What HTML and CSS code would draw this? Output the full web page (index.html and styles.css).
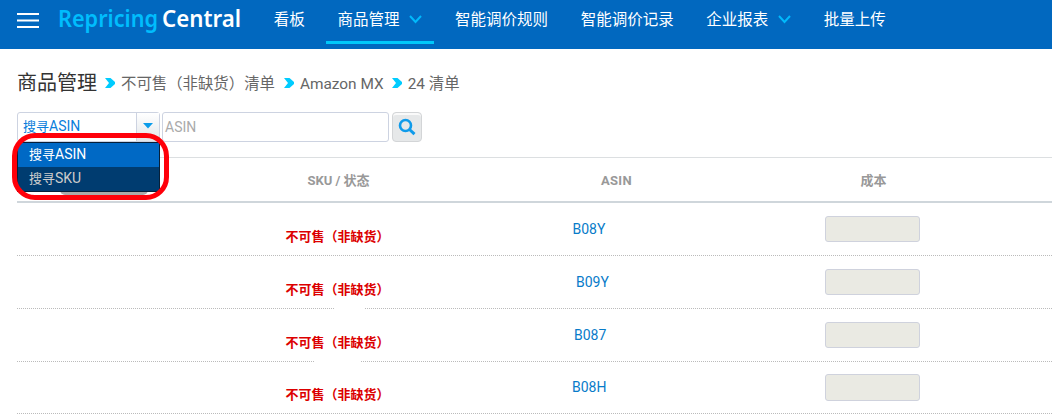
FILE: index.html
```html
<!DOCTYPE html>
<html lang="zh-CN">
<head>
<meta charset="utf-8">
<title>Repricing Central</title>
<link rel="stylesheet" href="styles.css">
</head>
<body>
<header class="topbar">
  <svg class="menu" width="22" height="15" viewBox="0 0 22 15"><path d="M0 1h22M0 7.500h22M0 14h22" stroke="#fff" stroke-width="2"/></svg>
  <svg class="logo" width="190" height="40" viewBox="0 0 190 40">
    <text class="logo-a" x="0" y="27" textLength="100" lengthAdjust="spacingAndGlyphs">Repricing</text>
    <text class="logo-b" x="104" y="27" textLength="79" lengthAdjust="spacingAndGlyphs">Central</text>
  </svg>
  <nav class="nav">
    <a class="nav-item">看板</a>
    <a class="nav-item active">商品管理<svg class="chev" width="13" height="9" viewBox="0 0 13 9"><path d="M1 1l5.500 6L12 1" fill="none" stroke="#00b9fc" stroke-width="2"/></svg></a>
    <a class="nav-item">智能调价规则</a>
    <a class="nav-item">智能调价记录</a>
    <a class="nav-item">企业报表<svg class="chev" width="13" height="9" viewBox="0 0 13 9"><path d="M1 1l5.500 6L12 1" fill="none" stroke="#00b9fc" stroke-width="2"/></svg></a>
    <a class="nav-item">批量上传</a>
  </nav>
</header>
<main class="page">
  <div class="crumbs">
    <h1>商品管理</h1>
    <svg class="sep sep-first" width="10" height="10" viewBox="0 0 10 10"><path d="M0 0h5.500L10 4v2l-4.500 4H0l4-5z" fill="#0cf"/></svg>
    <span>不可售（非缺货）清单</span>
    <svg class="sep" width="10" height="10" viewBox="0 0 10 10"><path d="M0 0h5.500L10 4v2l-4.500 4H0l4-5z" fill="#0cf"/></svg>
    <span>Amazon MX</span>
    <svg class="sep sep-last" width="10" height="10" viewBox="0 0 10 10"><path d="M0 0h5.500L10 4v2l-4.500 4H0l4-5z" fill="#0cf"/></svg>
    <span>24 清单</span>
  </div>
  <div class="search">
    <div class="select">
      <span class="select-value">搜寻<span class="latin">ASIN</span></span>
      <span class="select-arrow"><svg width="10" height="6" viewBox="0 0 10 6"><path d="M0 0h10L5 5.500z" fill="#0a9cea"/></svg></span>
      <div class="tab-shadow"></div>
      <div class="menu-list">
        <div class="option selected">搜寻<span class="latin">ASIN</span></div>
        <div class="option">搜寻<span class="latin">SKU</span></div>
      </div>
      <div class="highlight"></div>
    </div>
    <div class="field">ASIN</div>
    <div class="go"><svg width="18" height="18" viewBox="0 0 18 18"><circle cx="7.500" cy="7.500" r="5.500" fill="none" stroke="#109bea" stroke-width="2.600"/><path d="M11.500 11.500l5 4.700" stroke="#109bea" stroke-width="3"/></svg></div>
  </div>
  <div class="table">
    <div class="row head"><div></div><div>SKU / 状态</div><div class="h-asin">ASIN</div><div>成本</div><div></div></div>
    <div class="row"><div></div><div class="status">不可售（非缺货）</div><div class="asin a1">B08Y</div><div class="cost"><span></span></div><div></div></div>
    <div class="row gap-a"><div></div><div class="status">不可售（非缺货）</div><div class="asin a2">B09Y</div><div class="cost"><span></span></div><div></div></div>
    <div class="row gap-b"><div></div><div class="status">不可售（非缺货）</div><div class="asin a3">B087</div><div class="cost"><span></span></div><div></div></div>
    <div class="row last"><div></div><div class="status">不可售（非缺货）</div><div class="asin a4">B08H</div><div class="cost"><span></span></div><div></div></div>
  </div>
</main>
</body>
</html>
```
FILE: styles.css
```css
* { box-sizing: border-box; }
body {
  margin: 0;
  height: 416px;
  overflow: hidden;
  background: #fff;
  font-family: Roboto, "Noto Sans CJK SC", sans-serif;
  color: #666;
}
.topbar { display: flex; height: 49px; background: #0168bf; padding-left: 17px; }
.menu { margin-top: 13px; flex: none; }
.logo { margin-left: 19px; flex: none; overflow: visible; }
.logo text { font-family: "Noto Sans", "Open Sans", sans-serif; font-size: 23px; font-weight: 600; }
.logo-a { fill: #00bdfd; }
.logo-b { fill: #fff; }
.nav { display: flex; gap: 10px; margin-left: 14.500px; }
.nav-item {
  display: flex;
  height: 44px;
  padding: 0 11.300px;
  line-height: 40px;
  font-size: 15.500px;
  color: #fff;
  white-space: nowrap;
}
.nav-item.active { border-bottom: 3px solid #00c8fa; }
.chev { margin: 15px 0 0 10px; }
.page { padding-left: 17px; }
.crumbs { display: flex; height: 63px; padding-top: 21px; line-height: 28px; font-size: 15.400px; white-space: nowrap; }
.crumbs h1 { margin: 0; font-size: 20px; font-weight: 400; line-height: 27px; color: #333; }
.sep { margin: 8px 6px 0 9px; flex: none; }
.sep-first { margin: 8px 6px 0 8px; }
.sep-last { margin-left: 8px; }
.search { display: flex; height: 45px; }
.latin { font-size: 14px; }
.select { position: relative; z-index: 2; display: flex; width: 143px; height: 30px; border: 1px solid #cdd3e1; border-radius: 3px; }
.select-value { flex: 1; padding-left: 5px; font-size: 13px; line-height: 27px; color: #0a7edb; }
.select-arrow { width: 23px; border-left: 1px solid #cdd3e1; background: linear-gradient(#fff, #e2e6e9); padding: 10px 0 0 6px; line-height: 0; }
.menu-list { position: absolute; left: -1px; top: 29px; width: 143px; height: 50px; border: 1px solid #061f38; background: #003c70; }
.option { height: 24px; padding-left: 11px; font-size: 13px; line-height: 23px; color: #ccc; }
.option.selected { background: #0069c5; color: #fff; }
.tab-shadow { position: absolute; left: 42px; top: 76px; width: 88px; height: 6px; background: #aaa; border-radius: 0 0 5px 5px; }
.highlight { position: absolute; left: -6px; top: 20px; width: 157px; height: 67px; border: 5px solid #ff000a; border-radius: 23px; }
.field { width: 227px; height: 30px; margin-left: 2px; padding-left: 2px; border: 1px solid #cdd3e1; border-radius: 3px; font-size: 14px; line-height: 29px; color: #aaa; }
.go { width: 30px; height: 30px; margin-left: 3px; border: 1px solid #d3d5d7; border-radius: 4px; background: #e6e8e9; box-shadow: inset 0 2px #fafafa; padding: 5px 0 0 5px; line-height: 0; }
.row { position: relative; display: grid; grid-template-columns: 172px 299px 257px 257px 1fr; height: 53px; border-bottom: 1px dotted #bbb; }
.row.last { height: 52px; }
.row.head { height: 46px; border-top: 1px solid #dcdfe1; border-bottom: 2px solid #cfd6db; text-align: center; font-size: 13px; font-weight: 700; line-height: 45px; color: #999; }
.h-asin { letter-spacing: .3px; }
.status { padding-right: 2px; text-align: center; font-size: 13px; font-weight: 700; line-height: 68px; color: #dc0000; }
.asin { font-size: 14px; line-height: 52px; color: #087bc9; }
.a1 { padding-left: 84.500px; }
.a2 { padding-left: 88px; }
.a3 { padding-left: 86px; }
.a4 { padding-left: 84px; }
.last .asin { line-height: 50px; }
.last .status { line-height: 66px; }
.cost { padding: 13px 0 0 80px; }
.cost span { display: block; width: 95px; height: 26px; border: 1px solid #cfd2dd; border-radius: 3px; background: #eaeae3; }
.last .cost { padding-top: 12px; }
.last .cost span { height: 27px; }
.gap-a::after, .gap-b::after { content: ""; position: absolute; bottom: -1px; height: 1px; background: #fff; }
.gap-a::after { left: 317px; width: 30px; }
.gap-b::after { left: 298px; width: 45px; }
```
